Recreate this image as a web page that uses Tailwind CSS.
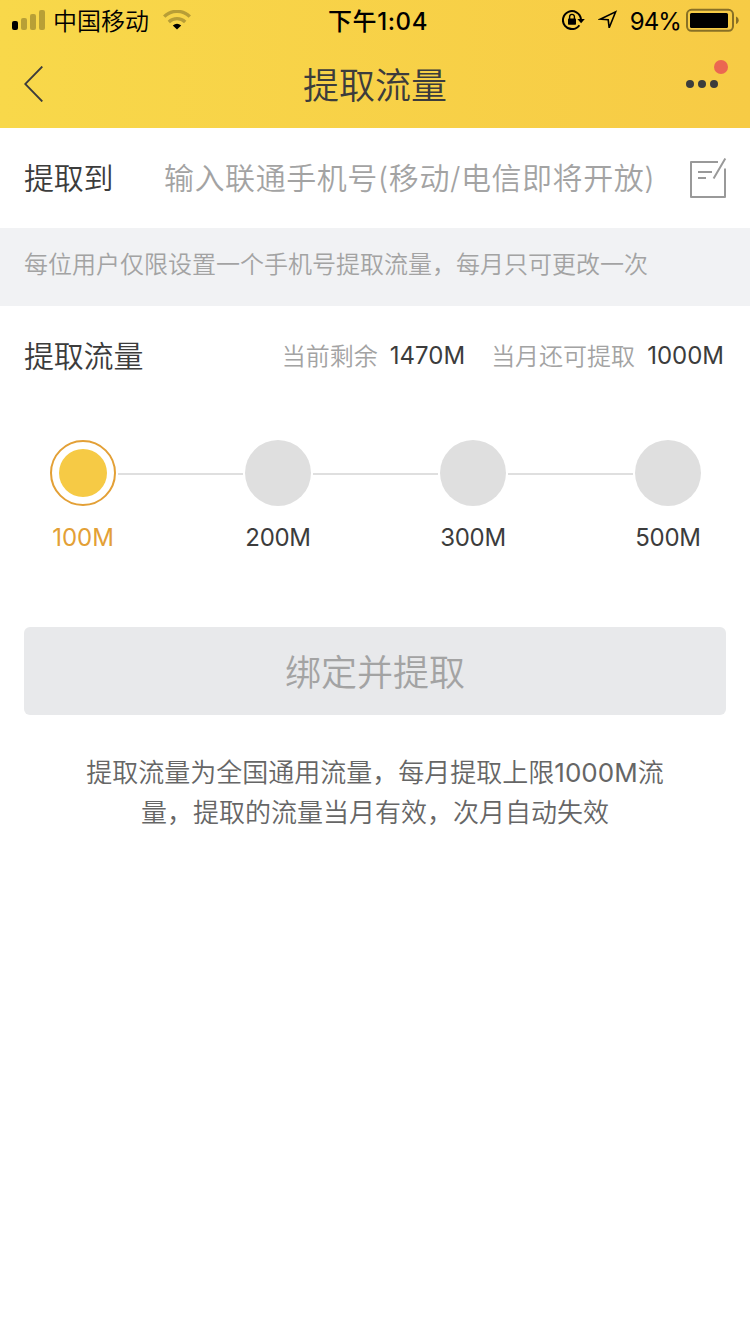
<!DOCTYPE html>
<html lang="zh-CN">
<head>
    <meta charset="UTF-8">
    <meta name="viewport" content="width=device-width, initial-scale=1.0">
    <title>提取流量</title>
    <script src="https://cdn.jsdelivr.net/npm/@tailwindcss/browser@4"></script>
    <style>
        body {
            font-family: 'Inter', 'Noto Sans CJK SC', sans-serif;
        }
    </style>
</head>
<body class="bg-white text-[#3c3c3c] min-h-screen whitespace-nowrap">

    <header class="h-32 bg-linear-to-r from-[#f8d84a] to-[#f7cb45]">
        <!-- Status bar -->
        <div class="h-10 grid grid-cols-[1fr_auto_1fr] items-center pl-3 pr-[11px] text-black text-2xl leading-10">
            <div class="flex items-center">
                <svg class="w-[33px] h-5" viewBox="0 0 33 20">
                    <rect x="0" y="11" width="6" height="9" rx="2"/>
                    <g fill-opacity=".26">
                        <rect x="9" y="8" width="6" height="12" rx="2"/>
                        <rect x="18" y="4" width="6" height="16" rx="2"/>
                        <rect x="27" y="0" width="6" height="20" rx="2"/>
                    </g>
                </svg>
                <span class="ml-2 pt-[3px] leading-[37px] font-[350]">中国移动</span>
                <svg class="ml-[14px] w-7 h-5" viewBox="0 0 28 20" fill="none">
                    <g stroke="#000" stroke-opacity=".26" stroke-width="3.4">
                        <path d="M1.2 6.6a18.2 18.2 0 0 1 25.6 0"/>
                        <path d="M5.8 11.9a12 12 0 0 1 16.4 0"/>
                    </g>
                    <path d="M9.8 15.6q4.2-3.8 8.4 0L14 19.6z" fill="#000"/>
                </svg>
            </div>
            <div class="pl-[5px] pt-[3px] leading-[37px] font-medium tracking-[.6px]">下午1:04</div>
            <div class="flex items-center justify-end">
                <svg class="w-[23px] h-5" viewBox="0 0 23 20" fill="none">
                    <path d="M17.4 15.2A9 9 0 1 1 18.9 9" stroke="#000" stroke-width="2"/>
                    <path d="M15.4 9h7.4l-3.7 4.2z" fill="#000"/>
                    <rect x="6" y="8.6" width="8" height="6.2" rx=".8" fill="#000"/>
                    <path d="M7.6 9V6.8a2.4 2.4 0 0 1 4.8 0V9" stroke="#000" stroke-width="1.4"/>
                </svg>
                <svg class="ml-[13px] w-5 h-5" viewBox="0 0 20 20" fill="none" stroke="#000" stroke-width="1.6">
                    <path d="M2.2 9.2 17.6 1.8 11.2 17.8 10.2 9.8z"/>
                </svg>
                <span class="ml-3 pt-[3px] leading-[37px] tracking-[-.9px]">94%</span>
                <svg class="ml-[5px] w-[53px] h-6" viewBox="0 0 53 24">
                    <rect x="1" y="1.8" width="46" height="21" rx="4.5" fill="none" stroke="#000" stroke-opacity=".45" stroke-width="2"/>
                    <rect x="4" y="5" width="38" height="15" rx="1.5"/>
                    <path d="M50 8.5c3.6 1.3 3.6 6.3 0 7.6z" fill-opacity=".45"/>
                </svg>
            </div>
        </div>
        <!-- Nav bar -->
        <div class="h-[88px] grid grid-cols-[1fr_auto_1fr] items-center pl-6 pr-[22px]">
            <svg class="w-5 h-9" viewBox="0 0 20 36" fill="none" stroke="#3c3c3c" stroke-width="1.8">
                <path d="M18.3.5 1.2 18l17.1 17.5"/>
            </svg>
            <h1 class="pt-[3px] pr-0.5 text-4xl font-[350]">提取流量</h1>
            <svg class="justify-self-end w-[42px] h-12" viewBox="0 0 42 48" fill="#3c3c3c">
                <circle cx="4" cy="24" r="4"/>
                <circle cx="16" cy="24" r="4"/>
                <circle cx="28" cy="24" r="4"/>
                <circle cx="35" cy="7" r="7" fill="#eb6751"/>
            </svg>
        </div>
    </header>

    <!-- Phone number -->
    <section class="h-[100px] flex items-center pl-6 pr-[23px]">
        <label class="w-[140px] text-3xl tracking-[-.2px] font-[350]">提取到</label>
        <span class="flex-1 text-3xl font-[350] tracking-[.55px] text-[#a3a3a3]">输入联通手机号(移动/电信即将开放)</span>
        <svg class="w-[38px] h-11" viewBox="0 0 38 44" fill="none" stroke="#999" stroke-width="2">
            <path d="M29 6H2v35h34V12.5" stroke-linejoin="round"/>
            <path d="M36.3 2.5 24.6 22.5M9 16h14M9 22h8"/>
        </svg>
    </section>
    <p class="h-[78px] bg-[#f1f2f4] px-6 pt-px text-2xl leading-[72px] font-[350] text-[#a3a3a3]">每位用户仅限设置一个手机号提取流量，每月只可更改一次</p>

    <!-- Amount -->
    <section class="px-6">
        <div class="h-[100px] flex items-center">
            <h2 class="flex-1 text-3xl tracking-[-.2px] font-[350]">提取流量</h2>
            <div class="flex pt-px pr-0.5 text-2xl">
                <span class="pt-px font-[350] text-[#a3a3a3]">当前剩余</span>
                <span class="ml-3">1470M</span>
                <span class="ml-[26px] pt-px font-[350] text-[#a3a3a3]">当月还可提取</span>
                <span class="ml-3">1000M</span>
            </div>
        </div>
        <div class="mt-[34px] flex justify-between pl-[26px] pr-[25px]">
            <div class="w-[66px] flex flex-col items-center">
                <div class="w-[66px] h-[66px] rounded-full border-2 border-[#e3a036] p-[7px]">
                    <div class="w-12 h-12 rounded-full bg-[#f6ca45]"></div>
                </div>
                <span class="mt-4 text-2xl text-[#e3a036]">100M</span>
            </div>
            <div class="mt-[33px] w-[125px] h-0.5 bg-[#dfdfdf]"></div>
            <div class="w-[66px] flex flex-col items-center">
                <div class="w-[66px] h-[66px] rounded-full bg-[#dfdfdf]"></div>
                <span class="mt-4 text-2xl tracking-[-.3px]">200M</span>
            </div>
            <div class="mt-[33px] w-[125px] h-0.5 bg-[#dfdfdf]"></div>
            <div class="w-[66px] flex flex-col items-center">
                <div class="w-[66px] h-[66px] rounded-full bg-[#dfdfdf]"></div>
                <span class="mt-4 text-2xl tracking-[-.3px]">300M</span>
            </div>
            <div class="mt-[33px] w-[125px] h-0.5 bg-[#dfdfdf]"></div>
            <div class="w-[66px] flex flex-col items-center">
                <div class="w-[66px] h-[66px] rounded-full bg-[#dfdfdf]"></div>
                <span class="mt-4 text-2xl tracking-[-.3px]">500M</span>
            </div>
        </div>

        <button class="mt-[73px] w-full h-[88px] pt-[3px] rounded-md bg-[#e8e9eb] text-4xl font-[350] text-[#a3a3a3]">绑定并提取</button>
        <p class="mt-[38px] text-center text-[26px] leading-10 font-[350] text-[#666]">提取流量为全国通用流量，每月提取上限<span class="font-normal">1000M</span>流<br>量，提取的流量当月有效，次月自动失效</p>
    </section>

</body>
</html>
